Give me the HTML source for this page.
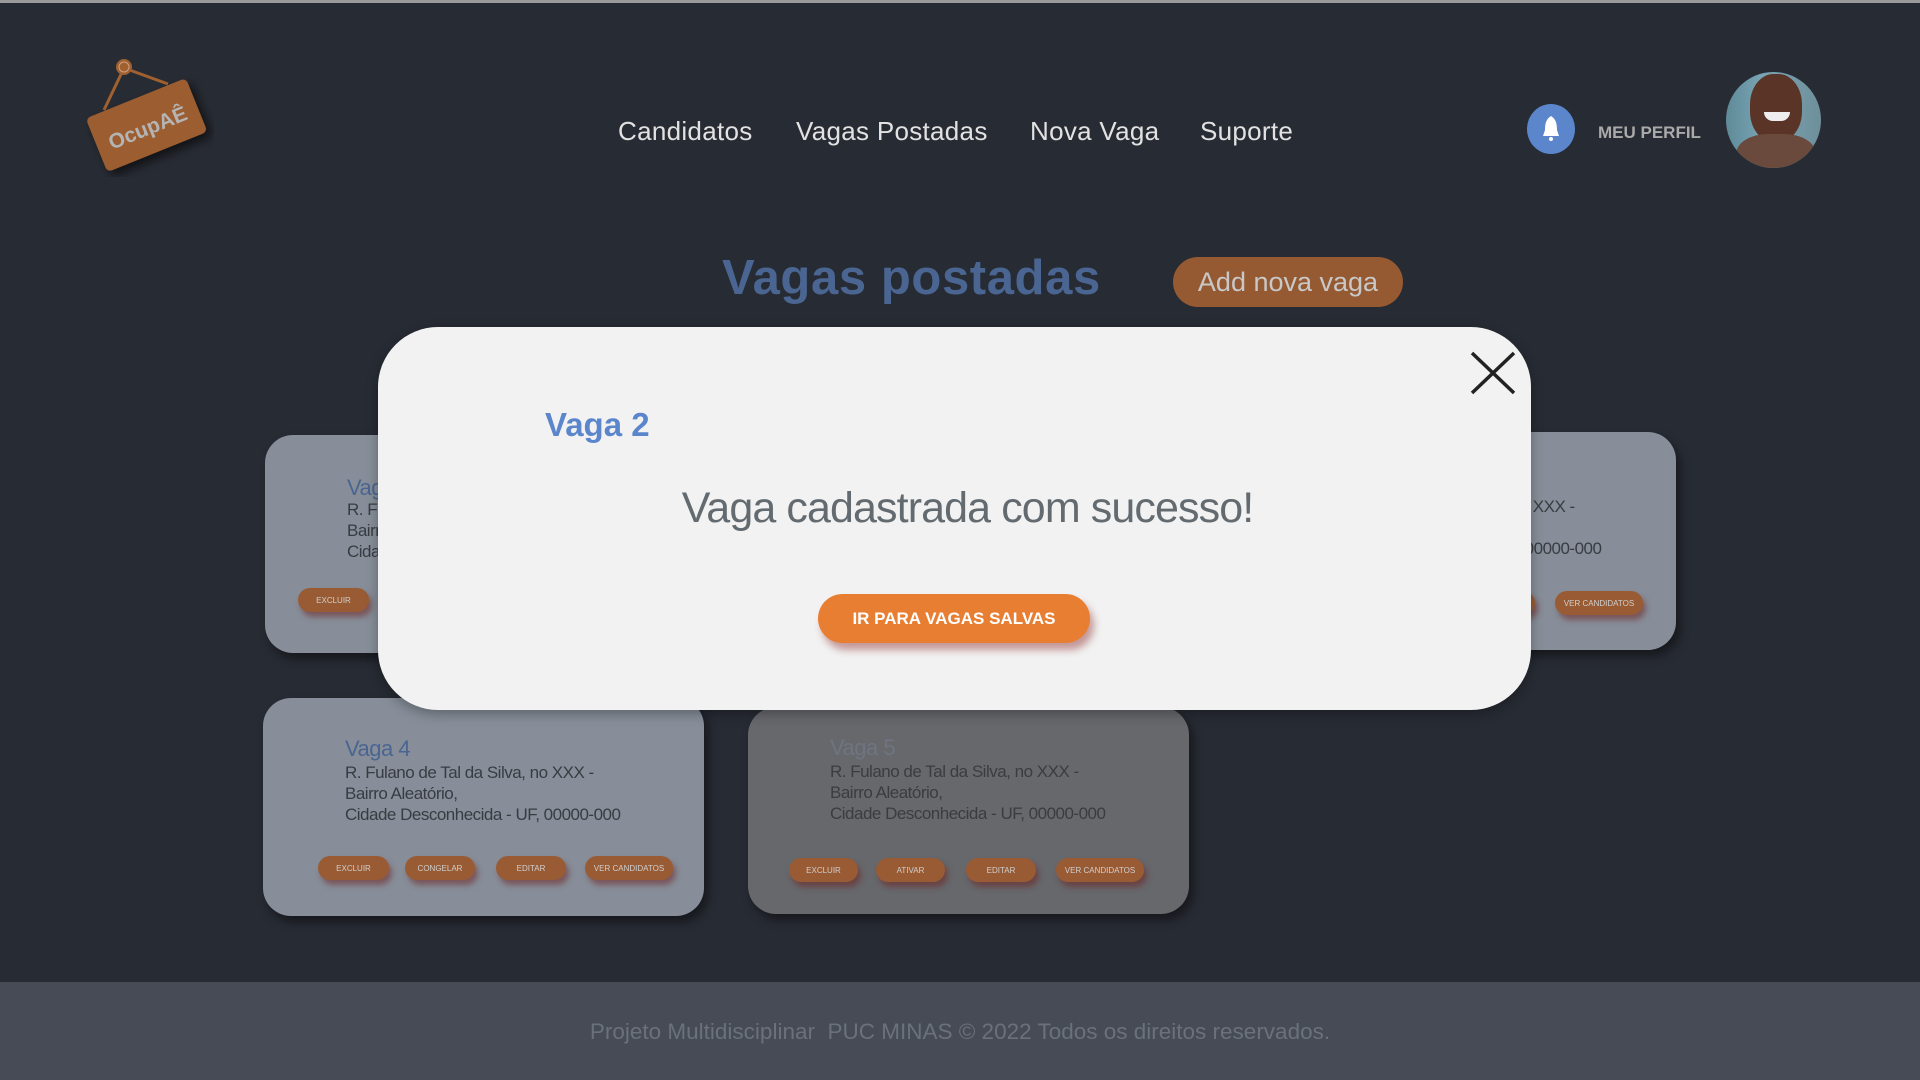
<!DOCTYPE html>
<html><head><meta charset="utf-8"><style>
*{margin:0;padding:0;box-sizing:border-box}
body{width:1920px;height:1080px;background:#272b33;font-family:"Liberation Sans",sans-serif;position:relative;overflow:hidden}
.abs{position:absolute}
.topline{left:0;top:0;width:1920px;height:3px;background:#9a9a9a}
.nav{top:116px;font-size:26px;color:#e2e2e2;white-space:nowrap;letter-spacing:0.3px}
.card{position:absolute;width:441px;height:218px;border-radius:28px;background:#878e99;box-shadow:4px 6px 10px rgba(0,0,0,.45)}
.card .t{position:absolute;left:82px;font-size:22px;color:#4a6591;letter-spacing:-0.5px}
.card .l{position:absolute;left:82px;font-size:17px;color:#383c42;line-height:21px;letter-spacing:-0.5px;white-space:nowrap}
.btn{position:absolute;height:24px;border-radius:12px;background:#995b33;color:#cfcfcf;font-size:8px;display:flex;align-items:center;justify-content:center;box-shadow:3px 5px 6px rgba(110,30,30,.5);white-space:nowrap}
</style></head><body>
<div class="abs topline"></div>
<svg class="abs" style="left:84px;top:52px" width="130" height="125" viewBox="0 0 130 125">
<line x1="40" y1="16" x2="20" y2="58" stroke="#a0602f" stroke-width="3"/>
<line x1="40" y1="16" x2="84" y2="32" stroke="#a0602f" stroke-width="3"/>
<circle cx="40" cy="15" r="8" fill="#a0602f"/><circle cx="40" cy="15" r="5" fill="none" stroke="#d0a080" stroke-width="1"/>
<g transform="rotate(-22 60 72)"><rect x="8" y="45" width="108" height="58" rx="5" fill="#9c5d30" style="filter:drop-shadow(3px 6px 5px rgba(0,0,0,.6))"/>
<text x="62" y="84" text-anchor="middle" font-family="Liberation Sans" font-weight="bold" font-size="21" fill="#b4b4b4">OcupAÊ</text></g>
</svg>
<div class="abs nav" style="left:618px">Candidatos</div>
<div class="abs nav" style="left:796px">Vagas Postadas</div>
<div class="abs nav" style="left:1030px">Nova Vaga</div>
<div class="abs nav" style="left:1200px">Suporte</div>
<div class="abs" style="left:1527px;top:104px;width:48px;height:50px;border-radius:50%;background:#5b86cc"></div>
<svg class="abs" style="left:1539px;top:114px" width="24" height="30" viewBox="0 0 24 30"><path d="M12 2 C7 5 6 10 6 16 L4 22 H20 L18 16 C18 10 17 5 12 2Z" fill="#fff"/><circle cx="12" cy="25" r="2" fill="#fff"/></svg>
<div class="abs" style="left:1598px;top:123px;font-size:17px;font-weight:bold;color:#aaa">MEU PERFIL</div>
<div class="abs" style="left:1726px;top:72px;width:95px;height:96px;border-radius:50%;overflow:hidden;background:linear-gradient(90deg,#5f8a98,#7aa5b5 40%,#6e8f9a)">
<div class="abs" style="left:24px;top:2px;width:52px;height:68px;border-radius:45%;background:#5a3426"></div>
<div class="abs" style="left:10px;top:62px;width:80px;height:50px;border-radius:40%;background:#6b4a3e"></div>
<div class="abs" style="left:38px;top:40px;width:26px;height:9px;border-radius:0 0 12px 12px;background:#eee"></div>
</div>
<div class="abs" style="left:722px;top:250px;font-size:49px;font-weight:bold;color:#4a6591;letter-spacing:0.6px">Vagas postadas</div>
<div class="abs" style="left:1173px;top:257px;width:230px;height:50px;border-radius:25px;background:#955a31;color:#c8c8c8;font-size:27px;display:flex;align-items:center;justify-content:center">Add nova vaga</div>

<div class="card" style="left:265px;top:435px">
<div class="t" style="top:40px">Vaga 1</div>
<div class="l" style="top:64px">R. Fulano de Tal da Silva, no XXX -<br>Bairro Aleatório,<br>Cidade Desconhecida - UF, 00000-000</div>
<div class="btn" style="left:33px;top:153px;width:71px">EXCLUIR</div></div>
<div class="card" style="left:1235px;top:432px">
<div class="l" style="top:64px;left:91px">R. Fulano de Tal da Silva, no XXX -<br>Bairro Aleatório,<br>Cidade Desconhecida - UF, 00000-000</div>
<div class="btn" style="left:230px;top:159px;width:70px">EDITAR</div>
<div class="btn" style="left:320px;top:159px;width:88px">VER CANDIDATOS</div></div>
<div class="card" style="left:263px;top:698px">
<div class="t" style="top:38px">Vaga 4</div>
<div class="l" style="top:64px">R. Fulano de Tal da Silva, no XXX -<br>Bairro Aleatório,<br>Cidade Desconhecida - UF, 00000-000</div>
<div class="btn" style="left:55px;top:158px;width:71px">EXCLUIR</div>
<div class="btn" style="left:142px;top:158px;width:70px">CONGELAR</div>
<div class="btn" style="left:233px;top:158px;width:70px">EDITAR</div>
<div class="btn" style="left:322px;top:158px;width:88px">VER CANDIDATOS</div></div>
<div class="card" style="left:748px;top:707px;height:207px;background:#67686c">
<div class="t" style="top:28px;color:#6e7480">Vaga 5</div>
<div class="l" style="top:54px;color:#3a3c40">R. Fulano de Tal da Silva, no XXX -<br>Bairro Aleatório,<br>Cidade Desconhecida - UF, 00000-000</div>
<div class="btn" style="left:41px;top:151px;width:69px">EXCLUIR</div>
<div class="btn" style="left:128px;top:151px;width:69px">ATIVAR</div>
<div class="btn" style="left:218px;top:151px;width:70px">EDITAR</div>
<div class="btn" style="left:308px;top:151px;width:88px">VER CANDIDATOS</div></div>

<div class="abs" style="left:378px;top:327px;width:1153px;height:383px;border-radius:60px;background:#f2f2f2;box-shadow:0 4px 12px rgba(0,0,0,.3)"></div>
<svg class="abs" style="left:1469px;top:351px" width="48" height="44" viewBox="0 0 48 44"><path d="M3 2 L45 42 M45 2 L3 42" stroke="#222" stroke-width="3.5"/></svg>
<div class="abs" style="left:545px;top:406px;font-size:33px;font-weight:bold;color:#5b86cc">Vaga 2</div>
<div class="abs" style="left:391px;width:1153px;top:484px;text-align:center;font-size:43px;color:#636b70;letter-spacing:-0.9px">Vaga cadastrada com sucesso!</div>
<div class="abs" style="left:818px;top:594px;width:272px;height:49px;border-radius:25px;background:#e87e31;color:#fff;font-weight:bold;font-size:17px;display:flex;align-items:center;justify-content:center;box-shadow:4px 7px 8px rgba(140,40,40,.45)">IR PARA VAGAS SALVAS</div>

<div class="abs" style="left:0;top:982px;width:1920px;height:98px;background:#464b55"></div>
<div class="abs" style="left:0;width:1920px;top:1019px;text-align:center;font-size:22.5px;color:#6b717b">Projeto Multidisciplinar&nbsp; PUC MINAS © 2022 Todos os direitos reservados.</div>
</body></html>
